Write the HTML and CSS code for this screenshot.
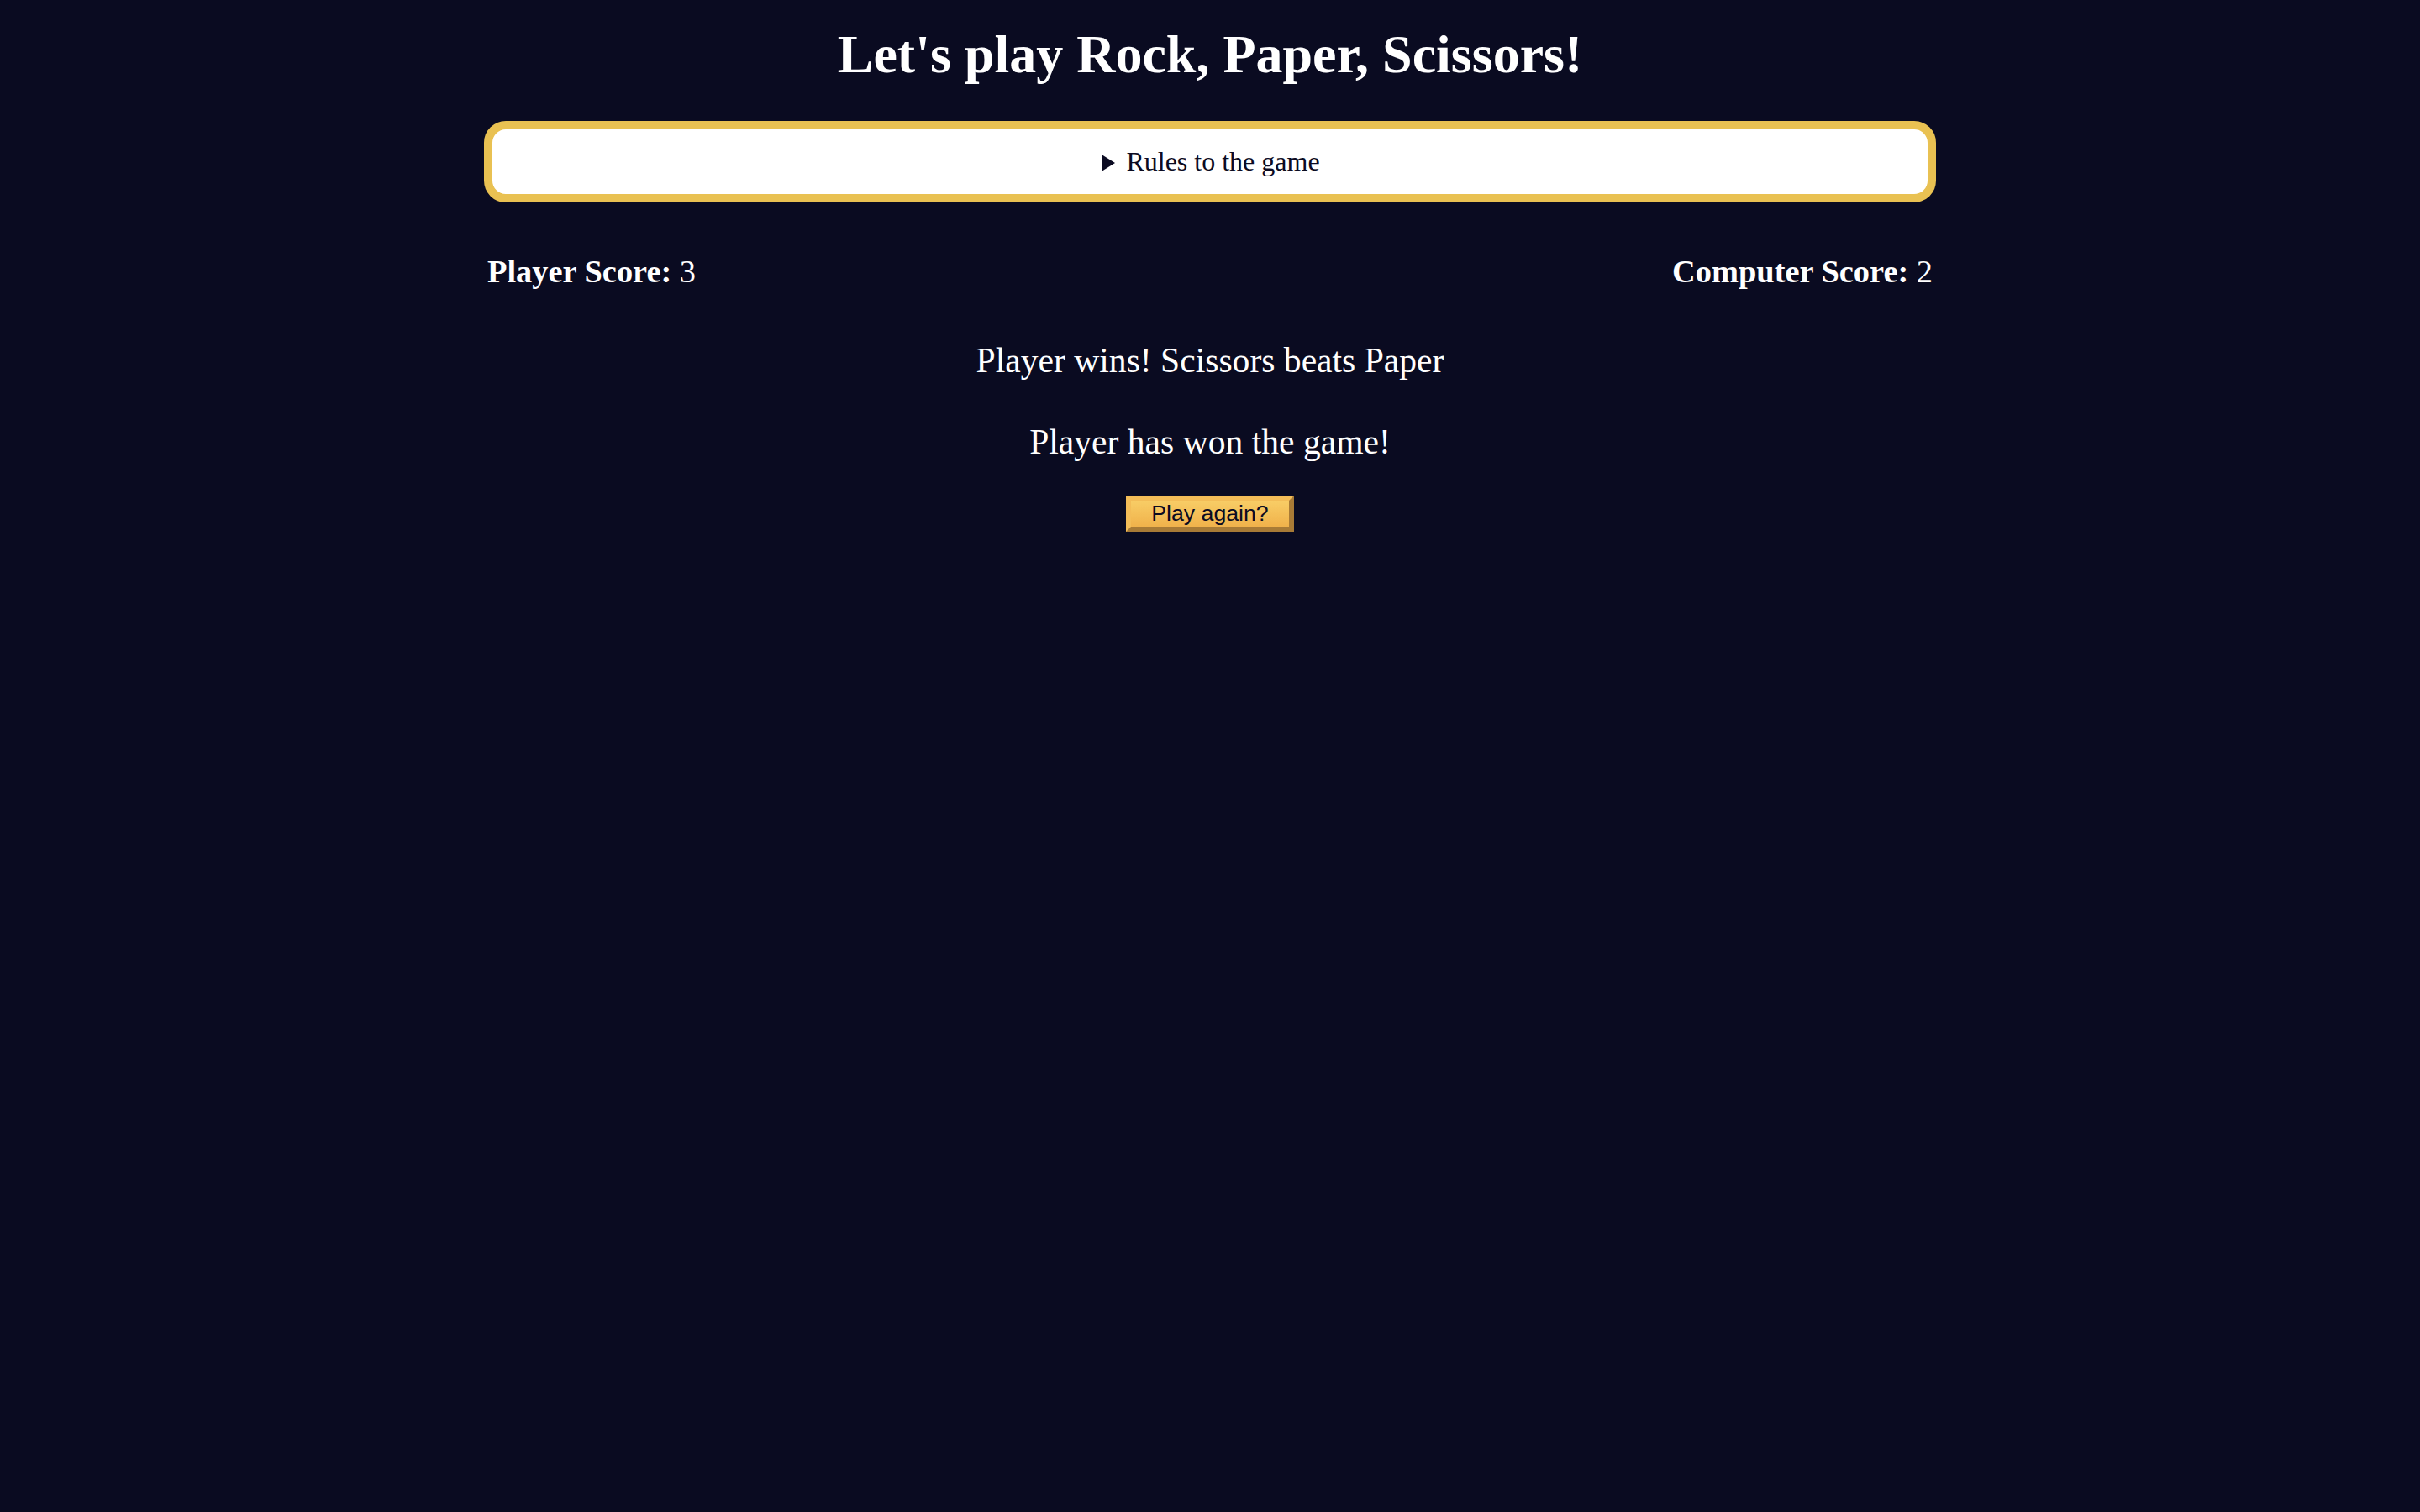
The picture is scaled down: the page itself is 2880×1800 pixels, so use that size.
FILE: index.html
```html
<!DOCTYPE html>
<html lang="en">
<head>
<meta charset="utf-8">
<title>Rock, Paper, Scissors</title>
<link rel="stylesheet" href="styles.css">
</head>
<body>
<main class="game">
  <h1 class="title">Let's play Rock, Paper, Scissors!</h1>
  <details class="rules">
    <summary class="rules-summary">Rules to the game</summary>
  </details>
  <div class="scores">
    <p class="score"><strong>Player Score:</strong> 3</p>
    <p class="score"><strong>Computer Score:</strong> 2</p>
  </div>
  <p class="message message-round">Player wins! Scissors beats Paper</p>
  <p class="message message-final">Player has won the game!</p>
  <div class="actions">
    <button class="play-again" type="button">Play again?</button>
  </div>
</main>
</body>
</html>
```
FILE: styles.css
```css
html, body {
  margin: 0;
  padding: 0;
}

body {
  background: #0a0b21;
  color: #ffffff;
  font-family: "Liberation Serif", "Times New Roman", serif;
  min-height: 1800px;
}

.game {
  width: 1728px;
  margin: 0 auto;
  padding-top: 28px;
}

.title {
  font-size: 64px;
  font-weight: bold;
  text-align: center;
  margin: 0 0 42px;
  line-height: normal;
}

.rules {
  background: #ffffff;
  border: 10px solid #e9c152;
  border-radius: 26px;
  color: #0b0b22;
}

.rules-summary {
  font-size: 32px;
  padding: 20px;
  text-align: center;
  cursor: pointer;
  list-style: none;
}

.rules-summary::-webkit-details-marker {
  display: none;
}

.rules-summary::before {
  content: "";
  display: inline-block;
  width: 0;
  height: 0;
  border-left: 16px solid #0b0b22;
  border-top: 10px solid transparent;
  border-bottom: 10px solid transparent;
  margin-right: 13px;
  margin-left: 2px;
  vertical-align: -1px;
}

.scores {
  display: flex;
  justify-content: space-between;
  margin-top: 61px;
  padding: 0 4px;
}

.score {
  margin: 0;
  font-size: 38.4px;
  line-height: 43px;
}

.score strong {
  font-weight: bold;
}

.message {
  font-size: 41.6px;
  text-align: center;
  margin: 0;
  line-height: normal;
}

.message-round {
  margin-top: 60px;
}

.message-final {
  margin-top: 49px;
}

.actions {
  display: flex;
  justify-content: center;
  margin-top: 40px;
}

.play-again {
  font-family: "Liberation Sans", Arial, sans-serif;
  font-size: 26.67px;
  line-height: normal;
  white-space: nowrap;
  color: #0b0b22;
  background: linear-gradient(#f8cd66, #f0b24b);
  border-width: 6px;
  border-style: solid;
  border-color: #f3bd58 #a87b36 #a87b36 #f3bd58;
  padding: 0;
  width: 200px;
  height: 43px;
  box-sizing: border-box;
}
```
